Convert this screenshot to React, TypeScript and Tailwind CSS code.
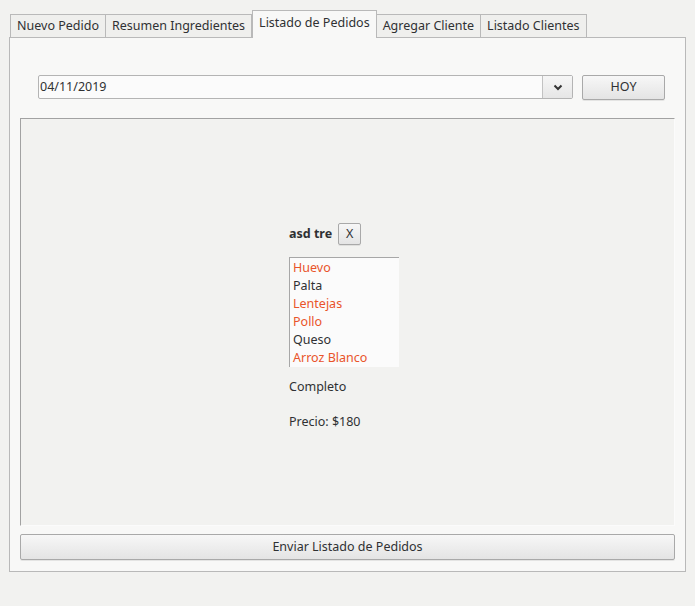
import React from 'react';

const tabs = ['Nuevo Pedido', 'Resumen Ingredientes', 'Listado de Pedidos', 'Agregar Cliente', 'Listado Clientes'];

const ingredientes = [
  { name: 'Huevo', faltante: true },
  { name: 'Palta', faltante: false },
  { name: 'Lentejas', faltante: true },
  { name: 'Pollo', faltante: true },
  { name: 'Queso', faltante: false },
  { name: 'Arroz Blanco', faltante: true },
];

const btn =
  'border border-[#a9a9a9] rounded-[2px] bg-gradient-to-b from-[#f7f7f7] to-[#e4e4e4] shadow-[0_1px_0_rgba(0,0,0,0.08)] text-[#2f3133]';

const App: React.FC = () => {
  const [active, setActive] = React.useState(2);

  return (
    <div className="w-[695px] h-[606px] bg-[#f2f2f0] pt-[10px] pl-[9px] pr-[9px] text-[12.5px] text-[#2f3133] font-['Noto_Sans',sans-serif]">
      {/* tab bar */}
      <div className="flex items-end h-[27px] pl-px relative z-10">
        {tabs.map((t, i) => {
          const isActive = i === active;
          return (
            <button
              key={t}
              onClick={() => setActive(i)}
              className={`px-[6px] leading-none border-t border-r border-[#b9b9b9]
                ${i === 0 || isActive ? 'border-l' : ''}
                ${isActive ? 'h-[28px] bg-[#f8f8f7] -mb-px pb-[3px]' : 'h-[23px] bg-[#efefed] pt-px'}
                ${i === active + 1 ? 'border-l-0' : ''}`}
            >
              {t}
            </button>
          );
        })}
      </div>

      {/* tab pane */}
      <div className="h-[535px] border border-[#b9b9b9] bg-[#f8f8f7] px-[10px] flex flex-col">
        <div className="flex items-center gap-[9px] pl-[18px] pr-[10px] mt-[36px] h-[26px]">
          <div className="flex-1 h-[24px] flex border border-[#b4b4b4] rounded-[2px] bg-[#fbfbfb]">
            <span className="flex-1 pl-px leading-[22px]">04/11/2019</span>
            <div className="w-[30px] border-l border-[#c2c2c2] bg-gradient-to-b from-[#f6f6f6] to-[#e6e6e6] flex items-center justify-center">
              <svg width="10" height="7" viewBox="0 0 10 7">
                <path d="M1.5 1.5 L5 5 L8.5 1.5" stroke="#333" strokeWidth="2" fill="none" />
              </svg>
            </div>
          </div>
          <button className={`${btn} w-[83px] h-[25px]`}>HOY</button>
        </div>

        {/* scroll area */}
        <div className="mt-[18px] h-[408px] border-t border-l border-[#a2a2a2] border-r border-b border-r-[#fbfbfb] border-b-[#fbfbfb] bg-[#f2f2f0] flex items-center justify-center">
          <div className="flex flex-col mt-[10px] -ml-[7px]">
            <div className="flex items-center gap-[6px] h-[21px]">
              <span className="font-bold">asd tre</span>
              <button className={`${btn} w-[23px] h-[22px] leading-none`}>X</button>
            </div>
            <ul className="mt-[12px] w-[110px] h-[110px] border-t border-l border-[#a7a7a7] bg-[#fbfbfb] pt-px pl-[3px]">
              {ingredientes.map((ing) => (
                <li key={ing.name} className={`h-[18px] leading-[18px] ${ing.faltante ? 'text-[#e9542a]' : ''}`}>
                  {ing.name}
                </li>
              ))}
            </ul>
            <p className="mt-[11px] leading-[18px]">Completo</p>
            <p className="mt-[17px] leading-[18px]">Precio: $180</p>
          </div>
        </div>

        <button className={`${btn} mt-[8px] h-[26px] w-full`}>Enviar Listado de Pedidos</button>
      </div>
    </div>
  );
};

export default App;
